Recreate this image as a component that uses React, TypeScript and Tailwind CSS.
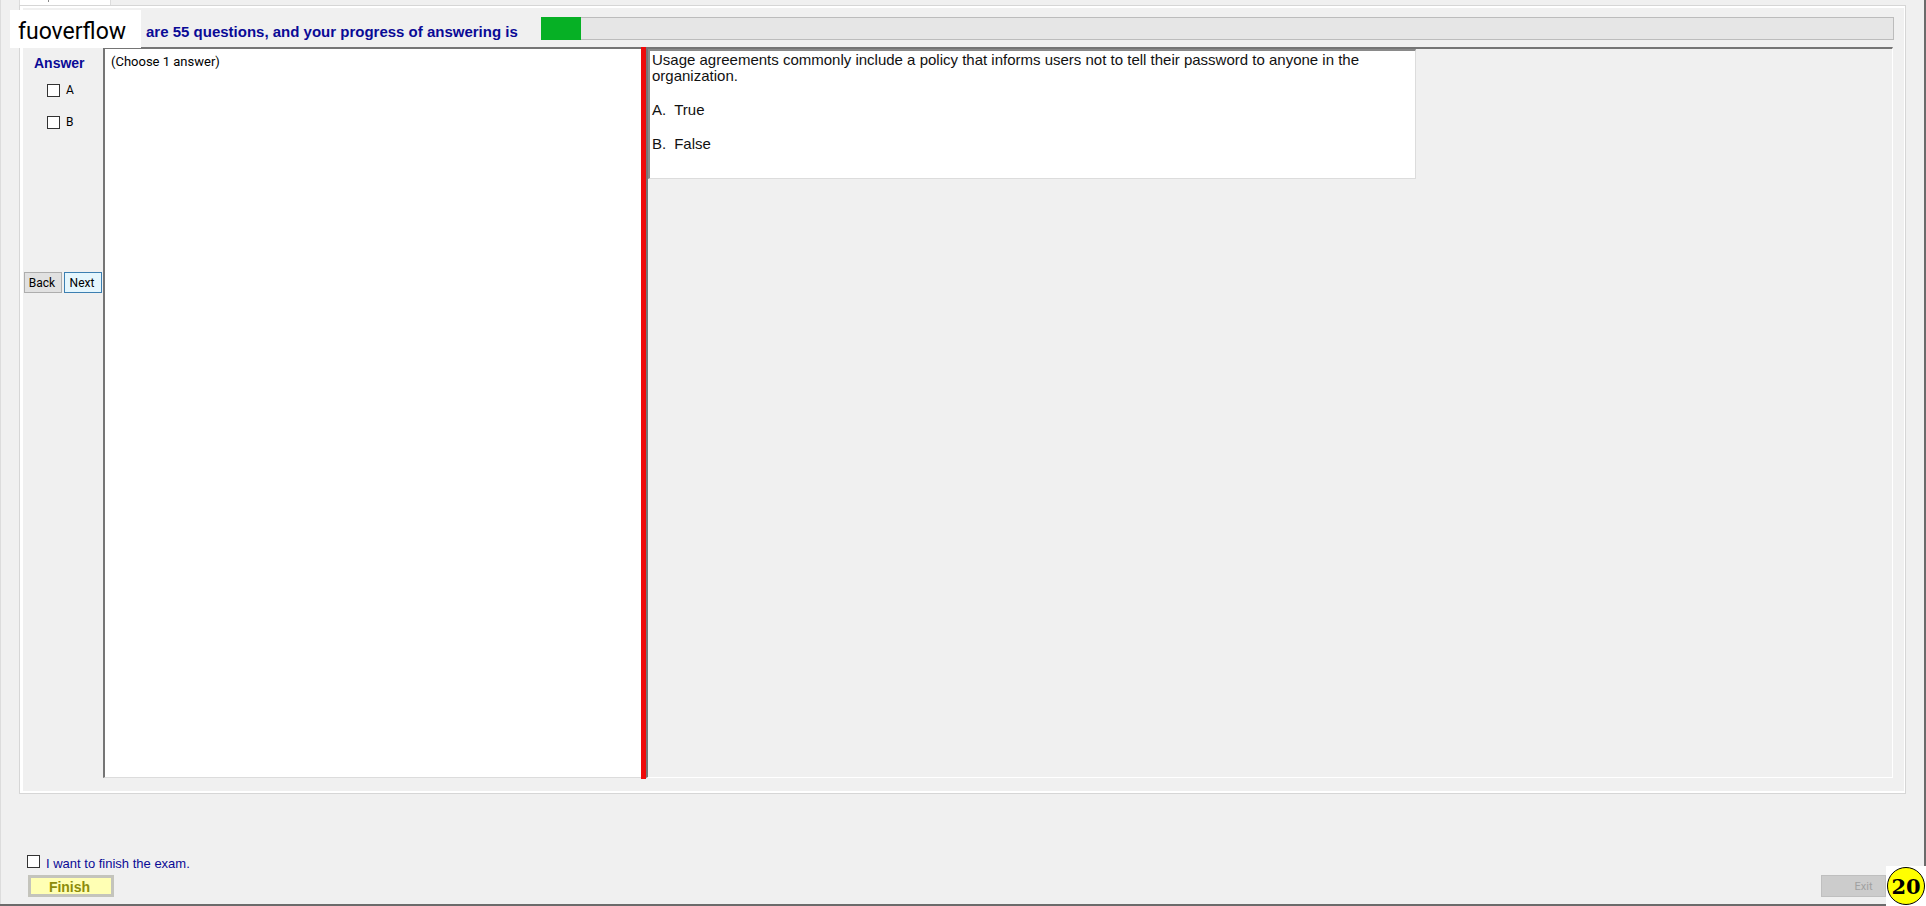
import { useState } from "react";

const TOTAL_QUESTIONS = 55;

const choices = [
  { key: "A", text: "True" },
  { key: "B", text: "False" },
];

function Checkbox({ checked, onChange, label, className }: {
  checked: boolean;
  onChange: () => void;
  label: string;
  className: string;
}) {
  return (
    <label className={`flex gap-[6px] ${className}`}>
      <input
        type="checkbox"
        checked={checked}
        onChange={onChange}
        className="size-[13px] shrink-0 appearance-none border border-[#333] bg-white checked:bg-[#333]"
      />
      {label}
    </label>
  );
}

function ProgressHeader() {
  return (
    <header className="flex h-[39px] items-start pr-[10px]">
      <h1 className="ml-[123px] w-[395px] shrink-0 pt-[14px] font-['Liberation_Sans',sans-serif] text-[15px] leading-[20px] font-bold whitespace-nowrap text-[#0a0a96]">
        are {TOTAL_QUESTIONS} questions, and your progress of answering is
      </h1>
      <div
        role="progressbar"
        aria-label="Progress of answering"
        aria-valuenow={3}
        className="mt-[9px] h-[23px] flex-1 border border-[#bcbcbc] bg-[#e6e6e6]"
      >
        <div className="-mt-px -ml-px h-[23px] w-[40px] bg-[#06b025]" />
      </div>
    </header>
  );
}

function AnswerColumn() {
  const [picked, setPicked] = useState<string[]>([]);

  const toggle = (key: string) =>
    setPicked((prev) => (prev.includes(key) ? prev.filter((k) => k !== key) : [...prev, key]));

  return (
    <aside className="flex w-[80px] shrink-0 flex-col">
      <h2 className="pt-[6px] pl-[11px] font-['Liberation_Sans',sans-serif] text-[14px] leading-[20px] font-bold text-[#0a0a96]">
        Answer
      </h2>
      <div className="flex h-[199px] flex-col gap-[16px] pt-[9px] pl-[24px]">
        {choices.map(({ key }) => (
          <Checkbox
            key={key}
            label={key}
            checked={picked.includes(key)}
            onChange={() => toggle(key)}
            className="h-[16px] items-center text-[12px]"
          />
        ))}
      </div>
      <div className="flex gap-[2px] pl-px text-[12px]">
        <button type="button" className="h-[21px] w-[38px] border border-[#adadad] bg-[#e1e1e1] pr-[2px] leading-none">
          Back
        </button>
        <button type="button" className="h-[21px] w-[38px] border border-[#3c7fb1] bg-[#e5f6fd] pr-[2px] leading-none">
          Next
        </button>
      </div>
    </aside>
  );
}

function QuestionPane() {
  return (
    <section className="flex-1 border-t-2 border-r border-b border-l-2 border-t-[#757575] border-r-white border-b-white border-l-[#757575]">
      <div className="h-[130px] w-[768px] border-t-2 border-r border-b border-l-2 border-t-[#8a8a8a] border-r-[#dcdcdc] border-b-[#dcdcdc] border-l-[#8a8a8a] bg-white pt-px pl-[2px] font-['Liberation_Sans',sans-serif] text-[15px] leading-[16px] text-[#111]">
        <p>
          Usage agreements commonly include a policy that informs users not to tell their password to
          anyone in the organization.
        </p>
        {choices.map(({ key, text }) => (
          <p key={key} className="mt-[18px] flex gap-[8px]">
            <span>{key}.</span>
            <span>{text}</span>
          </p>
        ))}
      </div>
    </section>
  );
}

export default function App() {
  const [wantFinish, setWantFinish] = useState(false);

  return (
    <div className="relative flex min-h-screen flex-col border-r-2 border-b-2 border-[#6b6b6b] bg-[#f0f0f0] font-[Roboto,sans-serif] text-black">
      <div className="flex grow flex-col border-l border-[#dcdcdc] pr-[18px] pl-[18px]">
        {/* tab strip, scrolled so that only its lower edge is left */}
        <div className="flex h-[5px]">
          <div className="h-[7px] w-[92px] border-x border-[#dcdcdc] bg-white">
            <div className="ml-[28px] h-[2px] w-px bg-[#888]" />
          </div>
        </div>
        <div className="flex grow flex-col border border-[#d6d6d6]">
          <div className="flex grow flex-col border-y-2 border-r border-l-3 border-white">
            <ProgressHeader />
            <main className="flex grow pr-[11px] pb-[13px]">
              <AnswerColumn />
              <section className="w-[538px] shrink-0 border-t-2 border-b border-l-2 border-t-[#757575] border-b-[#dcdcdc] border-l-[#757575] bg-white pt-[4px] pl-[6px] text-[13px] leading-[18px]">
                (Choose 1 answer)
              </section>
              <div className="-mb-px w-[5px] shrink-0 bg-[#ee0a0a]" />
              <QuestionPane />
            </main>
          </div>
        </div>
      </div>

      <footer className="flex h-[110px] items-end justify-between border-l border-[#dcdcdc] pr-[38px] pb-[7px] pl-[26px]">
        <div>
          <Checkbox
            label="I want to finish the exam."
            checked={wantFinish}
            onChange={() => setWantFinish(!wantFinish)}
            className="mb-[2px] h-[18px] items-start font-['Liberation_Sans',sans-serif] text-[13px] leading-[18px] text-[#0a0a96]"
          />
          <button
            type="button"
            className="ml-px block h-[22px] w-[86px] border-3 border-[#c4c4bc] bg-[#ffffb4] pt-px pr-[3px] font-['Liberation_Sans',sans-serif] text-[14px] leading-none font-bold text-[#8c8c0a]"
          >
            Finish
          </button>
        </div>
        <button
          type="button"
          disabled
          className="h-[22px] w-[65px] border border-[#bfbfbf] bg-[#cccccc] pl-[20px] text-[11px] leading-none text-[#a0a0a0]"
        >
          Exit
        </button>
      </footer>

      <div className="absolute top-[10px] left-[10px] h-[38px] w-[131px] bg-white pl-[8px] text-[23px] leading-[44px]">
        fuoverflow
      </div>
      <div className="absolute -right-[2px] -bottom-[2px] flex size-[40px] items-center justify-center bg-white">
        <div className="flex size-[38px] items-center justify-center rounded-full border border-black bg-[#ffff00] font-['DejaVu_Serif',serif] text-[21px] leading-none font-bold">
          20
        </div>
      </div>
    </div>
  );
}
